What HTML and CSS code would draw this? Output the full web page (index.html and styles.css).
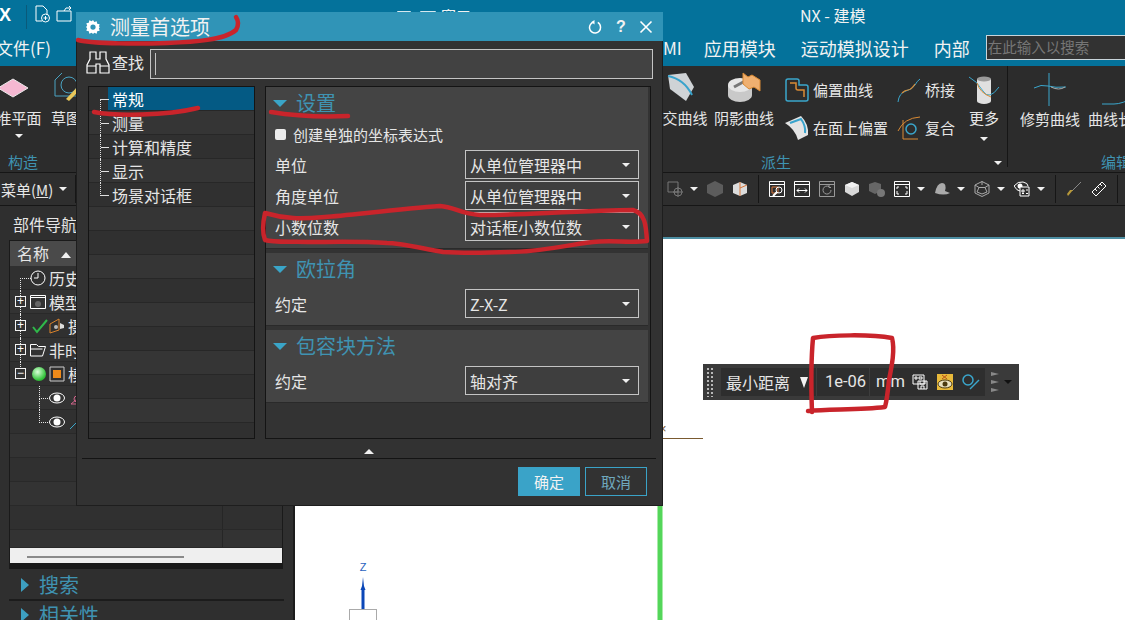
FILE: index.html
```html
<!DOCTYPE html>
<html lang="zh-CN">
<head>
  <meta charset="UTF-8">
  <title>NX - 建模</title>
  <link rel="stylesheet" href="styles.css">
</head>
<body>
<div class="app">

  <header class="header">
    <div class="topbar">
      <span class="logo">X</span>
      <span class="qa-sep"></span>
      <svg class="qa-icon" viewBox="0 0 16 18"><path d="M2 1h7l4 4v5M2 1v15h6" fill="none" stroke="#fff"/><circle cx="11.500" cy="13" r="4" fill="none" stroke="#fff"/><path d="M9.500 13h4M11.500 11v4" stroke="#fff"/></svg>
      <svg class="qa-icon" viewBox="0 0 16 18"><path d="M1 6h14v10H1zM8 6l2-3h5M13 1l2 2-2 2" fill="none" stroke="#fff"/></svg>
      <svg class="top-icon top-icon-first" viewBox="0 0 14 14"><path d="M.5 8.500h13v5H.5zM.5 11h13" fill="none" stroke="#d5e8ef"/></svg>
      <svg class="top-icon" viewBox="0 0 16 14"><path d="M.5 8.500h15v5H.5zM.5 11h15" fill="none" stroke="#d5e8ef"/></svg>
      <span class="top-window">窗口</span>
      <span class="top-title">NX - 建模</span>
    </div>
    <nav class="menubar">
      <span class="menu-file">文件(F)</span>
      <span class="menu-mi">MI</span>
      <span class="menu-item">应用模块</span>
      <span class="menu-item">运动模拟设计</span>
      <span class="menu-item">内部</span>
      <span class="search-box">在此输入以搜索</span>
    </nav>
  </header>

  <section class="ribbon">
    <div class="group group-build">
      <div class="tile tile-plane">
        <svg class="tile-icon" viewBox="0 0 30 20"><path d="M0 10 15 1l15 9-15 9z" fill="#f5b8d2" stroke="#e8e8e8"/></svg>
        <span>准平面</span>
        <i class="tri"></i>
      </div>
      <div class="tile tile-sketch">
        <svg class="tile-icon" viewBox="0 0 30 30"><path d="M8 1 1 8v16M1 24h24" fill="none" stroke="#4aa3c2"/><circle cx="15" cy="13" r="8" fill="none" stroke="#4aa3c2"/><path d="M12 27 26 12l3 3-14 14z" fill="#e8c75a"/></svg>
        <span>草图</span>
      </div>
      <span class="group-label group-label-build">构造</span>
    </div>

    <div class="group group-derived">
      <div class="tile tile-cross">
        <svg class="tile-icon" viewBox="0 0 30 30"><path d="M2 2 20 0l8 14-8 14L4 16z" fill="#cfd3d6"/><path d="M2 3q16 3 24 19" fill="none" stroke="#39a3cc" stroke-width="2"/></svg>
        <span>交曲线</span>
      </div>
      <div class="tile tile-shadow">
        <svg class="tile-icon" viewBox="0 0 34 34"><ellipse cx="13" cy="24" rx="12" ry="7" fill="#c9c9c9"/><path d="M1 14h24v10H1z" fill="#c9c9c9"/><ellipse cx="13" cy="14" rx="12" ry="7" fill="#e6e6e6"/><path d="M7 16 20 9" stroke="#777" stroke-width="3"/><path d="M16 2l5 4 4-2 8 5v11l-6-4-5 2-6-5z" fill="#f0b070" stroke="#d98a34"/></svg>
        <span>阴影曲线</span>
      </div>
      <div class="tile-stack">
        <div class="tile-row">
          <svg class="row-icon" viewBox="0 0 24 24"><path d="M3 1h9q2 0 2 2v4h7q2 0 2 2v12q0 2-2 2H3q-2 0-2-2V3q0-2 2-2z" fill="none" stroke="#3aa6cc" stroke-width="1.500"/><path d="M5 5h6v5q0 2 2 2h6v7" fill="none" stroke="#d98a34" stroke-width="1.500"/></svg>
          <span>偏置曲线</span>
        </div>
        <div class="tile-row">
          <svg class="row-icon" viewBox="0 0 24 24"><path d="M0 7 16 0q8 8 7 19l-10 5Q10 13 0 7z" fill="#e4e4e4"/><path d="M5 7 16 3q5 7 4 14" fill="none" stroke="#39a3cc" stroke-width="2"/></svg>
          <span>在面上偏置</span>
        </div>
      </div>
      <div class="tile-stack tile-stack-narrow">
        <div class="tile-row">
          <svg class="row-icon" viewBox="0 0 24 24"><path d="M1 24q1-9 8-11t9-6 5-6" fill="none" stroke="#3aa6cc"/><path d="M5 15q3-3 6-3t7-6" fill="none" stroke="#d98a34" stroke-width="1.200"/></svg>
          <span>桥接</span>
        </div>
        <div class="tile-row">
          <svg class="row-icon" viewBox="0 0 24 24"><path d="M1 15Q7 2 23 1M6 4v19h15" fill="none" stroke="#d98a34"/><circle cx="14" cy="13" r="5" fill="none" stroke="#3aa6cc" stroke-width="1.500"/></svg>
          <span>复合</span>
        </div>
      </div>
      <div class="tile tile-more">
        <svg class="tile-icon" viewBox="0 0 32 30"><path d="M9 4h14v22H9z" fill="#e0e0e0"/><ellipse cx="16" cy="26" rx="7" ry="3" fill="#e0e0e0"/><ellipse cx="16" cy="4" rx="7" ry="2.500" fill="#9a9a9a"/><path d="M1 2q8 4 14 14t16-4" fill="none" stroke="#3aa6cc"/><path d="M9 8q3 10 14 14" fill="none" stroke="#d98a34"/></svg>
        <span>更多</span>
        <i class="tri"></i>
      </div>
      <span class="group-label group-label-derived">派生</span>
      <i class="tri tri-corner"></i>
    </div>

    <div class="group group-edit">
      <div class="tile tile-trim">
        <svg class="tile-icon" viewBox="0 0 34 34"><path d="M16 1v33" stroke="#3aa6cc" fill="none"/><path d="M1 16q7-4 14-2t18 1" fill="none" stroke="#3aa6cc"/><path d="M18 15q8 4 14 0" fill="none" stroke="#aaa"/></svg>
        <span>修剪曲线</span>
      </div>
      <div class="tile tile-length">
        <svg class="tile-icon" viewBox="0 0 34 34"><path d="M1 32h12q8 0 21-7" fill="none" stroke="#3aa6cc"/></svg>
        <span>曲线长度</span>
      </div>
      <span class="group-label group-label-edit">编辑</span>
    </div>
  </section>

  <section class="toolbar">
    <div class="tb-left">
      <span class="tb-menu">菜单(<u>M</u>)</span>
      <i class="tri"></i>
      <span class="tb-sep"></span>
    </div>
    <div class="tb-right">
      <svg class="tb-icon" viewBox="0 0 16 16"><path d="M1 1h10v10H1z" fill="none" stroke="#777"/><circle cx="11" cy="11" r="4" fill="none" stroke="#777"/><path d="M11 6v10M6 11h10" stroke="#777"/></svg>
      <i class="tri"></i>
      <svg class="tb-icon" viewBox="0 0 16 16"><path d="M8 0l8 4v8l-8 4-8-4V4z" fill="#5c5c5c"/></svg>
      <svg class="tb-icon" viewBox="0 0 16 16"><path d="M8 1l7 3v8l-7 3-7-3V4z" fill="#dcdcdc"/><path d="M8 1v14M8 7l7-3" stroke="#d9773a" fill="none"/></svg>
      <span class="tb-sep"></span>
      <svg class="tb-icon" viewBox="0 0 16 16"><path d="M.5.5h15v15H.5zM.5 3.500h15" fill="none" stroke="#fff"/><path d="M3 6h6v6H3z" fill="none" stroke="#d9773a"/><circle cx="10" cy="9" r="3" fill="none" stroke="#fff"/><path d="M8 11l-4 4" stroke="#fff" stroke-width="2"/></svg>
      <svg class="tb-icon" viewBox="0 0 16 16"><path d="M.5.5h15v15H.5zM.5 3.500h15M3 9.500h10M3 9.500l2-2M3 9.500l2 2M13 9.500l-2-2M13 9.500l-2 2" fill="none" stroke="#fff"/></svg>
      <svg class="tb-icon" viewBox="0 0 16 16"><path d="M.5.5h15v15H.5zM.5 3.500h15" fill="none" stroke="#999"/><path d="M12 9a4 4 0 1 1-2-3.400M10 4v2.500h2" fill="none" stroke="#999"/></svg>
      <svg class="tb-icon" viewBox="0 0 16 16"><path d="M8 1l7 3v7l-7 4-7-4V4z" fill="#d8d8d8"/><path d="M1 4l7 3 7-3-7-3z" fill="#f2f2f2"/></svg>
      <svg class="tb-icon" viewBox="0 0 16 16"><path d="M6 1l6 2v7l-6 3-6-3V3z" fill="#666"/><circle cx="12" cy="12" r="4" fill="#777"/></svg>
      <svg class="tb-icon" viewBox="0 0 16 16"><path d="M.5.5h15v15H.5zM.5 3.500h15M3 8V6h2M13 8V6h-2M3 10v3h2M13 10v3h-2" fill="none" stroke="#fff"/></svg>
      <i class="tri"></i>
      <svg class="tb-icon" viewBox="0 0 16 16"><path d="M1 12q2-10 7-10t3 8l5 2q-6 3-15 0z" fill="#aaa"/></svg>
      <i class="tri"></i>
      <svg class="tb-icon" viewBox="0 0 16 16"><path d="M8 .5l7 3.500v8l-7 3.500L1 12V4zM1 4l4 2.500h6L15 4M5 6.500 3 11l5 2 5-2-2-4.500M8 .5V4" fill="none" stroke="#aaa"/></svg>
      <i class="tri"></i>
      <svg class="tb-icon" viewBox="0 0 16 16"><path d="M0 5q4-5 9-4t5 4M0 5q3 5 6 5" fill="none" stroke="#fff"/><circle cx="6" cy="5" r="2.500" fill="#fff"/><path d="M6 6h9v9H6z" fill="#2d2d2d" stroke="#fff"/><path d="M8 9h2v2H8zM12 9h2M8 12.500h2M12 12.500h2" stroke="#fff" fill="none"/></svg>
      <i class="tri"></i>
      <span class="tb-sep"></span>
      <svg class="tb-icon" viewBox="0 0 16 16"><path d="M15 1 6 10" stroke="#888"/><path d="M7 9 2 15l-1-2 3-4z" fill="#b8993a"/></svg>
      <svg class="tb-icon" viewBox="0 0 16 16"><path d="M11 1l4 4L5 15l-4-4zM9 3l2 2M6.500 5.500l2 2M4 8l2 2" fill="none" stroke="#fff"/></svg>
      <span class="tb-sep"></span>
    </div>
  </section>

  <main class="main">
    <aside class="nav">
      <div class="nav-title">部件导航器</div>
      <div class="nav-tree">
        <div class="nav-head">名称 <i class="tri-up"></i></div>
        <div class="nav-row nav-row-top">
          <svg class="nav-glyph nav-glyph-first" viewBox="0 0 16 16"><circle cx="8" cy="8" r="7" fill="none" stroke="#fff"/><path d="M8 3v5H4" fill="none" stroke="#fff"/></svg>
          <span class="nav-text">历史记录</span>
        </div>
        <div class="nav-row nav-row-line">
          <i class="exp">+</i>
          <svg class="nav-glyph" viewBox="0 0 16 16"><path d="M.5 1.500h15v13H.5zM.5 3.500h15" fill="none" stroke="#fff"/><circle cx="8" cy="10" r="3" fill="#666"/></svg>
          <span class="nav-text">模型视图</span>
        </div>
        <div class="nav-row nav-row-line">
          <i class="exp">+</i>
          <svg class="nav-glyph nav-check" viewBox="0 0 16 16"><path d="M1 9l4 5L15 2" fill="none" stroke="#2fb84a" stroke-width="2"/></svg>
          <svg class="nav-glyph" viewBox="0 0 16 16"><path d="M1 6l9-5v11l-9 3z" fill="none" stroke="#d9822b"/><circle cx="7" cy="9" r="2" fill="#bbb"/><path d="M11 5l4 2v3l-4 1z" fill="#ddd"/></svg>
          <span class="nav-text">摄像机</span>
        </div>
        <div class="nav-row nav-row-line">
          <i class="exp">+</i>
          <svg class="nav-glyph" viewBox="0 0 16 16"><path d="M.5 14V2.500h6l2 2h7l-3 9.500zM.5 7h12" fill="none" stroke="#fff"/></svg>
          <span class="nav-text">非时间戳特征</span>
        </div>
        <div class="nav-row nav-row-end">
          <i class="exp">−</i>
          <i class="ball"></i>
          <svg class="nav-glyph" viewBox="0 0 16 16"><path d="M1 1h14v14H1z" fill="none" stroke="#ccc"/><path d="M4 4h8v8H4z" fill="#ee8a1a"/></svg>
          <span class="nav-text">模型</span>
        </div>
        <div class="nav-row nav-row-child">
          <svg class="nav-eye" viewBox="0 0 16 12"><ellipse cx="8" cy="6" rx="7.500" ry="5" fill="none" stroke="#fff"/><circle cx="8" cy="6" r="3.500" fill="#fff"/></svg>
          <svg class="nav-glyph" viewBox="0 0 16 16"><path d="M8 1v8M8 9l-6 5M8 9l6 5M2 14h12" fill="none" stroke="#d0648a"/><circle cx="8" cy="9" r="3" fill="none" stroke="#d0648a"/></svg>
          <span class="nav-text">基准</span>
        </div>
        <div class="nav-row nav-row-child nav-row-child-end">
          <svg class="nav-eye" viewBox="0 0 16 12"><ellipse cx="8" cy="6" rx="7.500" ry="5" fill="none" stroke="#fff"/><circle cx="8" cy="6" r="3.500" fill="#fff"/></svg>
          <svg class="nav-glyph" viewBox="0 0 16 16"><path d="M1 15 15 1" stroke="#3aa6cc" fill="none"/></svg>
          <span class="nav-text">直线</span>
        </div>
        <div class="nav-row"></div>
        <div class="nav-row"></div>
        <div class="nav-row nav-row-split"></div>
        <div class="nav-row nav-row-split"></div>
        <div class="nav-row nav-row-split nav-row-short"></div>
        <div class="nav-scroll"><span class="nav-thumb"></span></div>
      </div>
      <div class="nav-fold"><i class="tri-right"></i>搜索</div>
      <div class="nav-fold nav-fold-line"><i class="tri-right"></i>相关性</div>
    </aside>

    <div class="view">
      <div class="view-strip"></div>
      <div class="canvas">
        <span class="green-line"></span>
        <span class="brown-line"></span>
        <span class="brown-mark">×</span>
        <div class="axis">
          <span class="axis-z">Z</span>
          <svg class="axis-arrow" viewBox="0 0 8 32"><path d="M4 0l1 9 1.500 4H5.500v19h-3V13H1.500l1.500-4z" fill="#0b47b8"/></svg>
          <span class="axis-box"></span>
        </div>
        <div class="measure">
          <span class="measure-grip"></span>
          <div class="measure-box">
            <span class="measure-name">最小距离</span>
            <i class="measure-tri"></i>
            <span class="measure-val">1e-06</span>
            <span class="measure-unit">mm</span>
            <svg class="measure-icon" viewBox="0 0 16 16"><path d="M1 1h11v9H1zM3 3h2v2H3zM7 3h3v2H7zM6 7h9v8H6zM8 7v3h5V7M9 15v-3h3v3" fill="#333" stroke="#fff"/></svg>
            <svg class="measure-icon" viewBox="0 0 16 16"><path d="M0 0h16v16H0z" fill="#e8b93a"/><ellipse cx="8" cy="10" rx="7" ry="4" fill="#e8e0c0" stroke="#4a3a10"/><circle cx="8" cy="10" r="2.500" fill="#4a3a10"/><path d="M5 1l5 4M10 1 5 5" stroke="#b8501a"/></svg>
            <svg class="measure-icon measure-icon-blue" viewBox="0 0 18 16"><circle cx="6" cy="6" r="5" fill="none" stroke="#3aa6cc" stroke-width="1.500"/><path d="M8 15 17 6" stroke="#3aa6cc" stroke-width="1.500"/></svg>
          </div>
          <svg class="measure-flags" viewBox="0 0 14 22"><path d="M2 1l8 2-8 2zM2 9l8 2-8 2zM2 17l8 2-8 2z" fill="#888"/></svg>
          <i class="tri tri-black"></i>
        </div>
      </div>
    </div>
  </main>

  <div class="dialog">
    <div class="dialog-title">
      <svg class="dialog-gear" viewBox="0 0 16 16"><path d="M8 0l1.500 2.300 2.700-.9.600 2.800 2.800.6-.9 2.700L16 8l-1.300 1.500.9 2.700-2.800.6-.6 2.800-2.700-.9L8 16l-1.500-1.300-2.700.9-.6-2.800-2.800-.6.9-2.700L0 8l1.300-1.500-.9-2.700 2.800-.6.6-2.800 2.700.9z" fill="#fff"/><circle cx="8" cy="8" r="3" fill="#3094b7"/></svg>
      <span class="dialog-name">测量首选项</span>
      <svg class="dialog-btn" viewBox="0 0 14 14"><path d="M6 2.100A5.500 5.500 0 1 0 12.500 7 5.500 5.500 0 0 0 9.800 2.300" fill="none" stroke="#fff" stroke-width="1.500"/><path d="M6.500 0v4.500L3.500 2z" fill="#fff"/></svg>
      <span class="dialog-help">?</span>
      <svg class="dialog-btn" viewBox="0 0 14 14"><path d="M1.500 1.500l11 11M12.500 1.500l-11 11" stroke="#fff" stroke-width="1.600"/></svg>
    </div>
    <div class="dialog-search">
      <svg class="binoculars" viewBox="0 0 24 24"><path d="M4 2h6v7h4V2h6v7l3 6v8h-9V14h-4v9H1v-8l3-6zM1 16h9M14 16h9" fill="none" stroke="#fff" stroke-width="1.200"/></svg>
      <span class="search-label">查找</span>
      <div class="search-input"><span class="caret"></span></div>
    </div>
    <div class="dialog-body">
      <ul class="pref-tree">
        <li class="pref-row pref-row-active"><span>常规</span></li>
        <li class="pref-row"><span>测量</span></li>
        <li class="pref-row"><span>计算和精度</span></li>
        <li class="pref-row"><span>显示</span></li>
        <li class="pref-row pref-row-last"><span>场景对话框</span></li>
        <li class="pref-row pref-row-blank"></li>
        <li class="pref-row pref-row-blank"></li>
        <li class="pref-row pref-row-blank"></li>
        <li class="pref-row pref-row-blank"></li>
        <li class="pref-row pref-row-blank"></li>
        <li class="pref-row pref-row-blank"></li>
        <li class="pref-row pref-row-blank"></li>
        <li class="pref-row pref-row-blank"></li>
        <li class="pref-row pref-row-blank"></li>
        <li class="pref-row pref-row-blank"></li>
      </ul>
      <div class="pref-panel">
        <section class="pref-section pref-section-main">
          <h2 class="pref-head"><i class="tri-blue"></i>设置</h2>
          <label class="pref-check"><i class="checkbox"></i>创建单独的坐标表达式</label>
          <div class="pref-field"><span>单位</span><div class="select">从单位管理器中<i class="tri"></i></div></div>
          <div class="pref-field"><span>角度单位</span><div class="select">从单位管理器中<i class="tri"></i></div></div>
          <div class="pref-field"><span>小数位数</span><div class="select">对话框小数位数<i class="tri"></i></div></div>
        </section>
        <section class="pref-section">
          <h2 class="pref-head"><i class="tri-blue"></i>欧拉角</h2>
          <div class="pref-field"><span>约定</span><div class="select">Z-X-Z<i class="tri"></i></div></div>
        </section>
        <section class="pref-section">
          <h2 class="pref-head"><i class="tri-blue"></i>包容块方法</h2>
          <div class="pref-field"><span>约定</span><div class="select">轴对齐<i class="tri"></i></div></div>
        </section>
      </div>
    </div>
    <div class="dialog-collapse"><i class="tri-up tri-up-small"></i></div>
    <div class="dialog-foot">
      <button class="btn btn-ok">确定</button>
      <button class="btn btn-cancel">取消</button>
    </div>
  </div>

  <!-- hand drawn red marks on top of the screenshot -->
  <svg class="marks" viewBox="0 0 1125 620">
    <path d="M78 40C95 44 140 44 167 43S225 40 236 30C239 25 238 20 236 17"/>
    <path d="M94 112C115 116 165 116 198 108"/>
    <path d="M271 112C295 116 325 117 348 116"/>
    <path d="M265 213C285 219 300 219 325 217S400 209 440 206C455 207 460 214 480 215S590 210 633 210C645 213 646 225 647 241C630 243 610 240 593 242C560 246 540 252 510 252C480 253 460 253 443 252C420 248 400 243 387 243C360 241 330 242 310 242C295 241 275 243 265 240C262 232 263 222 265 213Z"/>
    <path d="M812 412C811 385 811 360 813 338C830 335 870 334 892 338C895 350 892 365 889 380C888 390 887 400 885 407C860 410 830 409 808 411"/>
  </svg>

</div>
</body>
</html>
```

FILE: styles.css
```css
* {
  box-sizing: border-box;
}
html, body {
  margin: 0;
  padding: 0;
}
body {
  font-family: "Noto Sans CJK SC", "Noto Sans", sans-serif;
  color: #e6e6e6;
  background: #2d2d2d;
}
.app {
  position: relative;
  width: 1125px;
  height: 620px;
  overflow: hidden;
  display: flex;
  flex-direction: column;
}

/* small triangles */
.tri {
  display: inline-block;
  width: 0;
  height: 0;
  border-left: 4px solid transparent;
  border-right: 4px solid transparent;
  border-top: 4px solid #f0f0f0;
}
.tri-black {
  border-top-color: #111;
}
.tri-up {
  display: inline-block;
  width: 0;
  height: 0;
  border-left: 5px solid transparent;
  border-right: 5px solid transparent;
  border-bottom: 6px solid #f0f0f0;
}
.tri-up-small {
  border-bottom-width: 5px;
}
.tri-right {
  display: inline-block;
  width: 0;
  height: 0;
  border-top: 7px solid transparent;
  border-bottom: 7px solid transparent;
  border-left: 8px solid #3d9fc0;
  margin-right: 10px;
}
.tri-blue {
  display: inline-block;
  width: 0;
  height: 0;
  border-left: 7px solid transparent;
  border-right: 7px solid transparent;
  border-top: 7px solid #3aa5c8;
  margin: 0 9px 0 -2px;
}

/* header */
.header {
  height: 66px;
  background: #04729b;
  color: #f2f2f2;
  flex: none;
}
.topbar {
  height: 33px;
  display: flex;
  align-items: center;
  position: relative;
}
.logo {
  width: 13px;
  margin-bottom: 2px;
  font: bold 18px "Liberation Sans", sans-serif;
  color: #fff;
  text-indent: -1px;
  overflow: hidden;
}
.qa-sep {
  width: 1px;
  height: 24px;
  margin: 0 1px 0 13px;
  background: #0a5a7a;
}
.qa-icon {
  width: 16px;
  height: 18px;
  margin-left: 6px;
  margin-bottom: 6px;
}
.top-icon {
  width: 16px;
  height: 14px;
  margin-left: 9px;
  margin-top: -14px;
}
.top-icon-first {
  width: 14px;
  margin-left: 325px;
}
.top-window {
  margin-left: 5px;
  margin-top: -2px;
  font-size: 15px;
}
.top-title {
  position: absolute;
  left: 800px;
  top: 3px;
  font-size: 16px;
  line-height: 24px;
}
.menubar {
  height: 33px;
  padding-bottom: 4px;
  display: flex;
  align-items: center;
  font-size: 18px;
  line-height: 24px;
  white-space: nowrap;
}
.menu-file {
  margin-left: -4px;
  font-size: 17px;
}
.menu-mi {
  margin-left: 612px;
  width: 41px;
  font-size: 17px;
}
.menu-item {
  margin-right: 25px;
}
.search-box {
  width: 140px;
  height: 25px;
  margin-left: -9px;
  padding-left: 1px;
  border: 1px solid #c8d4da;
  border-right: 0;
  background: #323232;
  color: #767676;
  font-size: 14.500px;
  line-height: 22px;
}

/* ribbon */
.ribbon {
  height: 107px;
  flex: none;
  display: flex;
  background: #2c2c2c;
  font-size: 15px;
  line-height: 20px;
  white-space: nowrap;
  border-bottom: 1px solid #161616;
}
.group {
  position: relative;
  display: flex;
  align-items: flex-start;
}
.group-build {
  width: 663px;
  overflow: hidden;
}
.group-derived {
  width: 345px;
  border-right: 1px solid #161616;
  margin-bottom: 5px;
}
.group-edit {
  flex: 1;
  overflow: hidden;
}
.group-label {
  position: absolute;
  top: 86px;
  color: #3f93b2;
  font-size: 15px;
}
.group-label-build {
  left: 8px;
}
.group-label-derived {
  left: 98px;
}
.group-label-edit {
  left: 93px;
}
.tri-corner {
  position: absolute;
  left: 331px;
  top: 95px;
}
.tile {
  display: flex;
  flex-direction: column;
  align-items: center;
}
.tile-icon {
  display: block;
  flex: none;
}
.tile-plane {
  width: 48px;
  margin-left: -5px;
  padding-top: 12px;
}
.tile-plane .tile-icon {
  width: 30px;
  height: 20px;
  margin-left: -12px;
  margin-bottom: 10px;
}
.tile-plane .tri {
  margin-top: 6px;
}
.tile-sketch {
  padding-top: 6px;
  margin-left: 5px;
}
.tile-sketch .tile-icon {
  width: 30px;
  height: 30px;
  margin: 0 0 6px 6px;
}
.tile-cross {
  width: 42px;
  margin: 0 8px 0 1px;
  padding-top: 7px;
}
.tile-cross .tile-icon {
  width: 30px;
  height: 30px;
  margin: 0 0 5px -8px;
}
.tile-shadow {
  padding-top: 5px;
  margin-right: 11px;
}
.tile-shadow .tile-icon {
  width: 34px;
  height: 34px;
  margin-bottom: 3px;
}
.tile-stack {
  width: 112px;
  padding-top: 14px;
  display: flex;
  flex-direction: column;
  gap: 18px;
}
.tile-stack-narrow {
  width: 71px;
}
.tile-row {
  height: 20px;
  display: flex;
  align-items: center;
  gap: 4px;
}
.row-icon {
  width: 24px;
  height: 24px;
  flex: none;
}
.tile-more {
  width: 32px;
  margin-top: 9px;
}
.tile-more .tile-icon {
  width: 32px;
  height: 30px;
  margin-bottom: 3px;
}
.tile-more .tri {
  margin-top: 9px;
}
.tile-trim {
  width: 60px;
  margin-left: 12px;
  padding-top: 6px;
}
.tile-trim .tile-icon {
  width: 34px;
  height: 34px;
  margin-bottom: 3px;
}
.tile-length {
  width: 60px;
  margin-left: 8px;
  padding-top: 6px;
}
.tile-length .tile-icon {
  width: 34px;
  height: 34px;
  margin-bottom: 3px;
}

/* toolbar */
.toolbar {
  height: 33px;
  flex: none;
  display: flex;
  justify-content: space-between;
  align-items: center;
  padding-right: 6px;
  background: #2e2e2e;
  border-bottom: 1px solid #161616;
}
.tb-left {
  display: flex;
  align-items: center;
  font-size: 15px;
  white-space: nowrap;
}
.tb-menu {
  margin-left: 1px;
}
.tb-left .tri {
  margin-left: 6px;
}
.tb-left .tb-sep {
  margin-left: 8px;
}
.tb-right {
  display: flex;
  align-items: center;
  gap: 9px;
}
.tb-right .tri {
  margin-left: -2px;
}
.tb-right .tb-sep {
  margin: 0 1px;
}
.tb-icon {
  width: 16px;
  height: 16px;
  flex: none;
}
.tb-sep {
  width: 1px;
  height: 28px;
  background: #161616;
}

/* main area */
.main {
  flex: 1;
  display: flex;
  min-height: 0;
}
.nav {
  width: 295px;
  flex: none;
  background: #2f2f2f;
  border-right: 2px solid #1c1c1c;
  overflow: hidden;
}
.nav-title {
  height: 34px;
  padding: 7px 0 0 13px;
  font-size: 16px;
  line-height: 22px;
}
.nav-tree {
  width: 274px;
  margin-left: 9px;
  height: 329px;
  border: 1px solid #1a1a1a;
  background: #333;
  overflow: hidden;
  border-bottom: 6px solid #1a1a1a;
}
.nav-head {
  height: 25px;
  padding-left: 7px;
  background: #4a4a4a;
  font-size: 16px;
  line-height: 24px;
}
.nav-head .tri-up {
  margin-left: 8px;
  vertical-align: 2px;
}
.nav-row {
  position: relative;
  height: 24px;
  display: flex;
  align-items: center;
  padding-left: 5px;
  gap: 1px;
  border-bottom: 1px solid #292929;
  font-size: 16px;
  white-space: nowrap;
}
.nav-row:nth-child(even) {
  background: #303030;
}
.nav-row-short {
  height: 18px;
}
/* dotted tree lines of the navigator */
.nav-row-top::before,
.nav-row-line::before,
.nav-row-end::before,
.nav-row-child::before {
  content: "";
  position: absolute;
  left: 10px;
  top: 0;
  height: 24px;
  border-left: 1px dotted #e8e8e8;
}
.nav-row-top::before {
  top: 12px;
  height: 12px;
  width: 10px;
  border-top: 1px dotted #e8e8e8;
}
.nav-row-end::before {
  height: 7px;
}
.nav-row-child::before {
  left: 29px;
  width: 10px;
  border-bottom: 1px dotted #e8e8e8;
  height: 12px;
}
.nav-row-child:not(.nav-row-child-end)::after {
  content: "";
  position: absolute;
  left: 29px;
  top: 12px;
  height: 12px;
  border-left: 1px dotted #e8e8e8;
}
.nav-row-split::after {
  content: "";
  position: absolute;
  left: 212px;
  top: 0;
  bottom: 0;
  border-left: 1px solid #262626;
}
.nav-row-child {
  padding-left: 39px;
}
.nav-glyph {
  position: relative;
  width: 16px;
  height: 16px;
  flex: none;
}
.nav-glyph-first {
  margin-left: 15px;
}
.nav-check {
  margin-left: 2px;
}
.nav-text {
  margin-left: 2px;
}
.exp {
  position: relative;
  width: 11px;
  height: 11px;
  margin-right: 3px;
  border: 1px solid #f2f2f2;
  background: #333;
  color: #fff;
  font: 12px/9px "Liberation Sans", sans-serif;
  text-align: center;
  flex: none;
}
.ball {
  width: 14px;
  height: 14px;
  border-radius: 50%;
  margin: 0 2px;
  background: radial-gradient(circle at 40% 35%, #d8ffd8, #35c43c 65%, #1f8a24);
  flex: none;
}
.nav-eye {
  width: 16px;
  height: 12px;
  margin-right: 3px;
  flex: none;
}
.nav-scroll {
  height: 17px;
  background: #efefef;
  padding: 8px 0 0 17px;
}
.nav-thumb {
  display: block;
  width: 157px;
  height: 2px;
  background: #8a8a8a;
}
.nav-fold {
  height: 29px;
  margin: 1px 0 0 21px;
  display: flex;
  align-items: center;
  color: #3f93b2;
  font-size: 20px;
  line-height: 26px;
}
.nav-fold-line {
  margin: 0 0 0 9px;
  padding-left: 12px;
  width: 275px;
  border-top: 2px solid #1c1c1c;
}

/* graphics window */
.view {
  flex: 1;
  display: flex;
  flex-direction: column;
}
.view-strip {
  height: 31px;
  flex: none;
  background: #2e2e2e;
  border-bottom: 2px solid #4d8fa3;
  box-sizing: content-box;
}
.canvas {
  position: relative;
  flex: 1;
  background: #fff;
}
.green-line {
  position: absolute;
  left: 362px;
  top: 0;
  bottom: 0;
  width: 6px;
  background: #54d65a;
  border-left: 1px solid #a8eca8;
  border-right: 1px solid #a8eca8;
}
.brown-line {
  position: absolute;
  left: 368px;
  top: 199px;
  width: 40px;
  height: 1px;
  background: #7a5a30;
}
.brown-mark {
  position: absolute;
  left: 364px;
  top: 182px;
  color: #7a5a30;
  font: 13px "Liberation Sans", sans-serif;
}
.axis {
  position: absolute;
  left: 54px;
  top: 322px;
  width: 28px;
  display: flex;
  flex-direction: column;
  align-items: center;
}
.axis-z {
  color: #2a62c0;
  font: 11px/12px "Liberation Sans", sans-serif;
  margin-bottom: 4px;
}
.axis-arrow {
  width: 8px;
  height: 32px;
  display: block;
}
.axis-box {
  width: 28px;
  height: 20px;
  border: 1px solid #aaa;
  background: #fff;
}
.measure {
  position: absolute;
  left: 408px;
  top: 125px;
  width: 316px;
  height: 36px;
  display: flex;
  align-items: center;
  background: #3a3a3a;
}
.measure-grip {
  width: 8px;
  height: 30px;
  margin-left: 3px;
  background-image: radial-gradient(circle, #b8b8b8 1px, transparent 1.200px);
  background-size: 4px 4px;
}
.measure-box {
  width: 264px;
  height: 28px;
  margin-left: 7px;
  padding-left: 5px;
  display: flex;
  align-items: center;
  background: #2e2e2e;
  font-size: 16px;
  white-space: nowrap;
}
.measure-name {
  width: 74px;
}
.measure-tri {
  width: 0;
  height: 0;
  border-left: 4px solid transparent;
  border-right: 4px solid transparent;
  border-top: 11px solid #f2f2f2;
  margin-right: 8px;
}
.measure-val {
  padding-left: 8px;
  border-left: 1px solid #3d3d3d;
  width: 53px;
  font: 16.500px "Roboto", sans-serif;
  line-height: 28px;
}
.measure-unit {
  padding-left: 6px;
  border-left: 1px solid #3d3d3d;
  width: 38px;
  font: 16.500px "Roboto", sans-serif;
  line-height: 28px;
}
.measure-icon {
  width: 16px;
  height: 16px;
  margin-left: 5px;
  margin-right: 4px;
  flex: none;
}
.measure-icon-blue {
  width: 18px;
}
.measure-flags {
  width: 14px;
  height: 22px;
  margin-left: 4px;
  flex: none;
}
.measure .tri-black {
  margin-left: 1px;
}

/* dialog window */
.dialog {
  position: absolute;
  left: 76px;
  top: 12px;
  width: 587px;
  height: 494px;
  display: flex;
  flex-direction: column;
  background: #323232;
  border: 1px solid #1e1e1e;
  border-top: 0;
  padding-bottom: 9px;
}
.dialog-title {
  height: 29px;
  flex: none;
  display: flex;
  align-items: center;
  padding-left: 10px;
  margin: 0 -1px;
  background: #3094b7;
  color: #f2f2f2;
}
.dialog-gear {
  width: 14px;
  height: 14px;
}
.dialog-name {
  flex: 1;
  margin-left: 10px;
  font-size: 20px;
  line-height: 28px;
}
.dialog-btn {
  width: 14px;
  height: 14px;
  margin-right: 12px;
}
.dialog-btn:last-child {
  margin-right: 10px;
}
.dialog-help {
  width: 14px;
  margin-right: 11px;
  font: bold 16px "Liberation Sans", sans-serif;
  text-align: center;
}
.dialog-search {
  height: 30px;
  margin-top: 8px;
  flex: none;
  display: flex;
  align-items: center;
  padding-left: 9px;
}
.binoculars {
  width: 24px;
  height: 24px;
  margin-top: -4px;
  flex: none;
}
.search-label {
  margin: -4px 0 0 2px;
  font-size: 16px;
}
.search-input {
  width: 503px;
  height: 30px;
  margin-left: 6px;
  padding: 3px 4px;
  border: 1px solid #c4c4c4;
  background: #424242;
}
.caret {
  display: block;
  width: 1px;
  height: 22px;
  background: #c4c4c4;
}
.dialog-body {
  height: 353px;
  margin-top: 7px;
  flex: none;
  display: flex;
  padding-left: 11px;
  gap: 10px;
}
.pref-tree {
  width: 167px;
  margin: 0;
  padding: 0;
  list-style: none;
  overflow: hidden;
  background: #303030;
  border: 1px solid #141414;
  flex: none;
}
.pref-row {
  position: relative;
  height: 24px;
  padding-left: 19px;
  border-bottom: 1px solid #272727;
  font-size: 16px;
  line-height: 25px;
}
.pref-row:nth-child(even) {
  background: #353535;
}
.pref-row span {
  display: block;
  height: 23px;
  padding-left: 4px;
}
.pref-row::before {
  content: "";
  position: absolute;
  left: 11px;
  top: 0;
  width: 8px;
  height: 24px;
  border-left: 1px dotted #e0e0e0;
  background: linear-gradient(#e0e0e0, #e0e0e0) no-repeat 0 12px / 8px 1px;
}
.pref-row-active::before {
  top: 12px;
  height: 12px;
  background-position: 0 0;
}
.pref-row-last::before {
  height: 13px;
}
.pref-row-blank::before {
  display: none;
}
.pref-row-active span {
  background: #045a84;
  color: #fff;
}
.pref-panel {
  width: 386px;
  flex: none;
  padding-right: 2px;
  background: #333;
  border: 1px solid #141414;
  display: flex;
  flex-direction: column;
  gap: 4px;
}
.pref-section {
  background: #444;
  padding: 0 9px 5px;
  border-bottom: 1px solid #2a2a2a;
  font-size: 16px;
}
.pref-section-main {
  height: 162px;
  padding-bottom: 0;
}
.pref-head {
  height: 32px;
  margin: 0;
  display: flex;
  align-items: center;
  color: #3f93b2;
  font-size: 20px;
  font-weight: normal;
  line-height: 28px;
}
.pref-head + .pref-field {
  margin-top: 4px;
}
.pref-check {
  display: flex;
  align-items: center;
  height: 31px;
  font-size: 15px;
}
.checkbox {
  width: 11px;
  height: 11px;
  margin-right: 7px;
  border-radius: 2px;
  background: #ececec;
  flex: none;
}
.pref-field {
  display: flex;
  align-items: center;
  justify-content: space-between;
  margin-bottom: 2px;
  height: 29px;
  line-height: 22px;
}
.select {
  width: 174px;
  height: 29px;
  padding: 0 8px 0 4px;
  display: flex;
  align-items: center;
  justify-content: space-between;
  border: 1px solid #c4c4c4;
  background: #3e3e3e;
  font-size: 16px;
}
.dialog-collapse {
  height: 20px;
  flex: none;
  margin: 0 6px 0 5px;
  display: flex;
  align-items: center;
  justify-content: center;
  border-bottom: 1px solid #141414;
  padding-top: 5px;
}
.dialog-foot {
  flex: 1;
  display: flex;
  justify-content: flex-end;
  align-items: flex-end;
  gap: 5px;
  padding-right: 15px;
}
.btn {
  width: 62px;
  height: 29px;
  padding: 0;
  border: 1px solid #3aa3c8;
  font-family: inherit;
  font-size: 15px;
}
.btn-ok {
  background: #3aa3c8;
  color: #f2f2f2;
}
.btn-cancel {
  background: transparent;
  color: #6fa8bd;
}

/* red pen marks */
.marks {
  position: absolute;
  left: 0;
  top: 0;
  width: 1125px;
  height: 620px;
  pointer-events: none;
  fill: none;
  stroke: #c9242b;
  stroke-width: 4.500;
  stroke-linecap: round;
  stroke-linejoin: round;
}
```
